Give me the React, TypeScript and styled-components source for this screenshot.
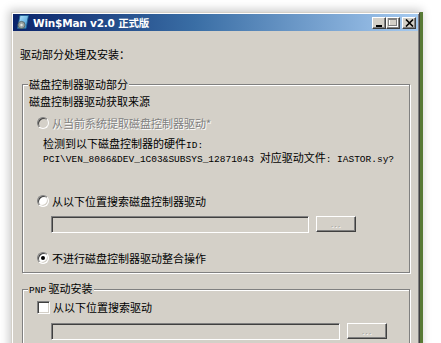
import React from 'react';
import styled, { createGlobalStyle } from 'styled-components';

const GlobalStyle = createGlobalStyle`
  html, body {
    margin: 0;
    padding: 0;
    background: #ffffff;
    overflow: hidden;
  }
  body {
    width: 441px;
    height: 343px;
    font-family: "Noto Sans CJK SC", "Liberation Sans", sans-serif;
  }
`;

const CJK = `"Noto Sans CJK SC", "Liberation Sans", sans-serif`;
const MONO = `"Liberation Mono", "Noto Sans CJK SC", monospace`;

export default function App() {
  return (
    <>
      <GlobalStyle />
      <Page>
        <Window>
          <TitleBar>
            <AppIcon />
            <TitleText>Win$Man v2.0 正式版</TitleText>
            <CaptionButtons>
              <CaptionButton>
                <svg width="8" height="8" viewBox="0 0 8 8">
                  <rect x="1" y="6" width="6" height="2" fill="#000" />
                </svg>
              </CaptionButton>
              <CaptionButton>
                <svg width="10" height="9" viewBox="0 0 10 9">
                  <rect x="1.5" y="1.5" width="8" height="7" fill="none" stroke="#fff" />
                  <rect x="0.5" y="0.5" width="8" height="7" fill="none" stroke="#808080" />
                  <rect x="0.5" y="1" width="8" height="1" fill="#808080" />
                </svg>
              </CaptionButton>
              <CaptionButton $gap>
                <svg width="9" height="8" viewBox="0 0 9 8">
                  <path d="M1 0.5 L8 7.5 M8 0.5 L1 7.5" stroke="#000" strokeWidth="1.6" />
                </svg>
              </CaptionButton>
            </CaptionButtons>
          </TitleBar>

          <Content>
            <Heading>驱动部分处理及安装：</Heading>

            <Group $mt={16} $pb={7}>
              <Legend>磁盘控制器驱动部分</Legend>
              <Label $mt={3}>磁盘控制器驱动获取来源</Label>

              <OptionRow $mt={8}>
                <Radio $disabled />
                <OptionText $disabled>从当前系统提取磁盘控制器驱动*</OptionText>
              </OptionRow>

              <InfoLine $mt={6}>
                检测到以下磁盘控制器的硬件<Code>ID:</Code>
              </InfoLine>
              <InfoLine>
                <Code>PCI\VEN_8086&amp;DEV_1C03&amp;SUBSYS_12871043 </Code>对应驱动文件<Code>: IASTOR.sy?</Code>
              </InfoLine>

              <OptionRow $mt={30}>
                <Radio />
                <OptionText>从以下位置搜索磁盘控制器驱动</OptionText>
              </OptionRow>

              <PathRow $mt={8}>
                <PathInput $w={258} />
                <BrowseButton>...</BrowseButton>
              </PathRow>

              <OptionRow $mt={18}>
                <Radio $checked />
                <OptionText>不进行磁盘控制器驱动整合操作</OptionText>
              </OptionRow>
            </Group>

            <Group $mt={8} $pb={20}>
              <Legend>
                <Code>PNP</Code> 驱动安装
              </Legend>
              <OptionRow $mt={2}>
                <CheckBox />
                <OptionText>从以下位置搜索驱动</OptionText>
              </OptionRow>
              <PathRow $mt={9}>
                <PathInput $w={289} />
                <BrowseButton>...</BrowseButton>
              </PathRow>
            </Group>
          </Content>
        </Window>
      </Page>
    </>
  );
}

const AppIcon = () => (
  <IconBox>
    <svg width="14" height="15" viewBox="0 0 14 15">
      <defs>
        <linearGradient id="sheet" x1="0" y1="0" x2="1" y2="1">
          <stop offset="0" stopColor="#bfeaff" />
          <stop offset="1" stopColor="#2f8fd0" />
        </linearGradient>
      </defs>
      <path d="M4 0.5 L12.5 0.5 L10 13.5 L1.5 13.5 Z" fill="url(#sheet)" stroke="#1d5f92" strokeWidth="0.8" />
      <circle cx="5.5" cy="10" r="3.6" fill="#9aa3a0" stroke="#4d5a58" strokeWidth="0.8" />
      <circle cx="5.5" cy="10" r="1.2" fill="#dfe6e4" />
    </svg>
  </IconBox>
);

// Styled Components
const Page = styled.div`
    width: 441px;
    height: 343px;
    padding: 12px 0 0 11px;
    box-sizing: border-box;
    overflow: hidden;
    background: #ffffff;
`;

const Window = styled.div`
    width: 405px;
    height: 360px;
    background: #d4d0c8;
    border: 1px solid;
    border-color: #d4d0c8 #404040 #404040 #d4d0c8;
    box-shadow:
        inset 1px 1px 0 #ffffff,
        inset -1px -1px 0 #808080,
        3px 0 0 0 #587a36,
        0 0 9px 2px rgba(0, 0, 0, 0.22);
    padding: 1px;
    display: flex;
    flex-direction: column;
`;

const TitleBar = styled.div`
    height: 17px;
    display: flex;
    align-items: center;
    padding: 0 2px 0 2px;
    background: linear-gradient(to right, #0a246a 0%, #3a6ea5 45%, #a6caf0 100%);
`;

const IconBox = styled.div`
    width: 16px;
    height: 16px;
    display: flex;
    align-items: center;
    justify-content: center;
    margin-right: 2px;
`;

const TitleText = styled.span`
    flex: 1;
    color: #ffffff;
    font-family: "DejaVu Sans", "Noto Sans CJK SC", sans-serif;
    font-weight: bold;
    font-size: 10.5px;
    letter-spacing: -0.2px;
    white-space: nowrap;
`;

const CaptionButtons = styled.div`
    display: flex;
    align-items: center;
`;

const CaptionButton = styled.div<{ $gap?: boolean }>`
    width: 14px;
    height: 12px;
    margin-left: ${p => (p.$gap ? '2px' : '0')};
    box-sizing: border-box;
    background: #d4d0c8;
    border: 1px solid;
    border-color: #ffffff #404040 #404040 #ffffff;
    box-shadow: inset -1px -1px 0 #808080;
    display: flex;
    align-items: center;
    justify-content: center;
`;

const Content = styled.div`
    display: flex;
    flex-direction: column;
    padding: 16px 8px 0 9px;
    font-family: ${CJK};
    font-size: 11px;
    line-height: 14px;
    color: #000000;
`;

const Heading = styled.div`
    margin-left: -2px;
    height: 14px;
`;

const Group = styled.fieldset<{ $mt: number; $pb: number }>`
    margin: ${p => p.$mt}px 0 0 0;
    padding: 0 6px ${p => p.$pb}px 6px;
    min-width: 0;
    border: 1px solid #808080;
    box-shadow: inset 1px 1px 0 #ffffff, 1px 1px 0 #ffffff;
    display: flex;
    flex-direction: column;
`;

const Legend = styled.legend`
    padding: 0 1px;
    margin-left: -1px;
    background: #d4d0c8;
    line-height: 14px;
    font-size: 11px;
`;

const Label = styled.div<{ $mt: number }>`
    margin-top: ${p => p.$mt}px;
    height: 14px;
`;

const OptionRow = styled.div<{ $mt: number }>`
    margin-top: ${p => p.$mt}px;
    height: 14px;
    display: flex;
    align-items: center;
    padding-left: 8px;
    gap: 3px;
`;

const OptionText = styled.span<{ $disabled?: boolean }>`
    white-space: nowrap;
    color: ${p => (p.$disabled ? '#808080' : '#000000')};
    text-shadow: ${p => (p.$disabled ? '1px 1px 0 #ffffff' : 'none')};
`;

const Radio = styled.span<{ $checked?: boolean; $disabled?: boolean }>`
    position: relative;
    width: 12px;
    height: 12px;
    flex: none;
    box-sizing: border-box;
    border-radius: 50%;
    border: 1px solid;
    border-color: #808080 #ffffff #ffffff #808080;
    background: ${p => (p.$disabled ? '#d4d0c8' : '#ffffff')};
    box-shadow: inset 1px 1px 0 #404040, inset -1px -1px 0 #d4d0c8;
    &::after {
        content: '';
        display: ${p => (p.$checked ? 'block' : 'none')};
        position: absolute;
        left: 3px;
        top: 3px;
        width: 4px;
        height: 4px;
        border-radius: 50%;
        background: #000000;
    }
`;

const CheckBox = styled.span`
    width: 13px;
    height: 13px;
    flex: none;
    box-sizing: border-box;
    border: 1px solid;
    border-color: #808080 #ffffff #ffffff #808080;
    background: #ffffff;
    box-shadow: inset 1px 1px 0 #404040, inset -1px -1px 0 #d4d0c8;
`;

const InfoLine = styled.div<{ $mt?: number }>`
    margin-top: ${p => p.$mt ?? 0}px;
    padding-left: 14px;
    height: 14px;
    white-space: nowrap;
`;

const Code = styled.span`
    font-family: ${MONO};
    font-size: 9.5px;
`;

const PathRow = styled.div<{ $mt: number }>`
    margin-top: ${p => p.$mt}px;
    padding-left: 22px;
    display: flex;
    align-items: flex-start;
    gap: 7px;
`;

const PathInput = styled.div<{ $w: number }>`
    width: ${p => p.$w}px;
    height: 17px;
    box-sizing: border-box;
    background: #d4d0c8;
    border: 1px solid;
    border-color: #808080 #ffffff #ffffff #808080;
    box-shadow: inset 1px 1px 0 #404040, inset -1px -1px 0 #d4d0c8;
`;

const BrowseButton = styled.div`
    width: 40px;
    height: 16px;
    box-sizing: border-box;
    background: #d4d0c8;
    border: 1px solid;
    border-color: #ffffff #404040 #404040 #ffffff;
    box-shadow: inset -1px -1px 0 #808080;
    display: flex;
    align-items: center;
    justify-content: center;
    font-family: "Liberation Sans", sans-serif;
    font-size: 9px;
    line-height: 1;
    color: #a0a0a0;
    text-shadow: 1px 1px 0 #ffffff;
    letter-spacing: 1px;
`;
